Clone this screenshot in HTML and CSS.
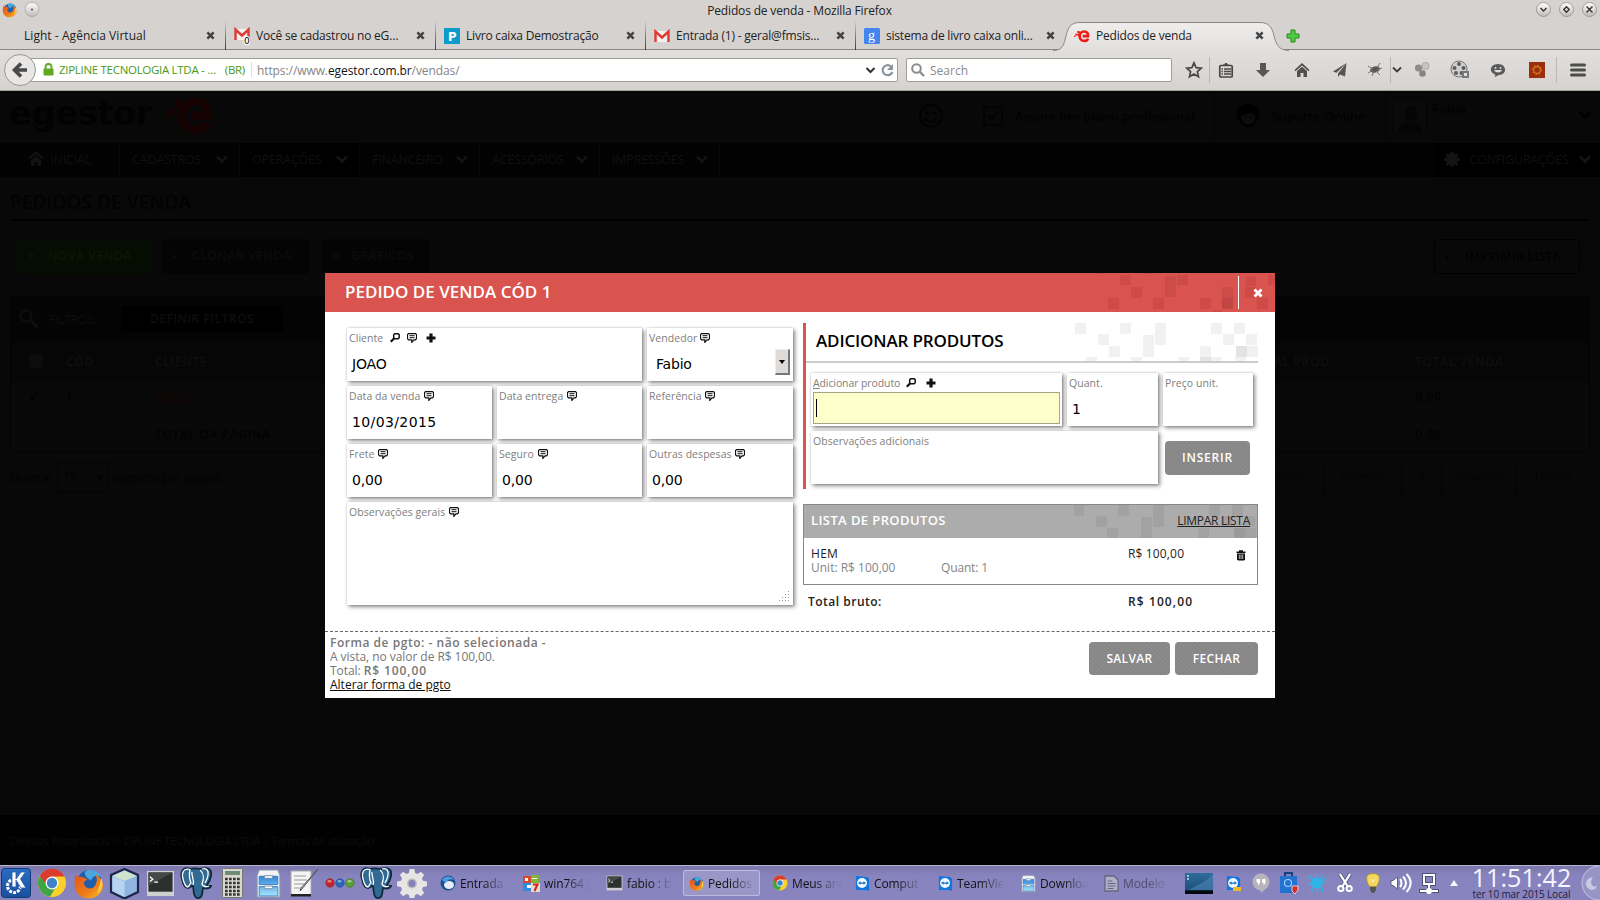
FILE: index.html
```html
<!DOCTYPE html>
<html lang="pt-BR">
<head>
<meta charset="utf-8">
<title>Pedidos de venda - Mozilla Firefox</title>
<link rel="stylesheet" href="styles.css">
</head>
<body>
<svg class="defs" width="0" height="0">
  <defs>
    <linearGradient id="gBtn" x1="0" y1="0" x2="0" y2="1"><stop offset="0" stop-color="#fff"/><stop offset="1" stop-color="#bdbbb8"/></linearGradient>
    <linearGradient id="gTab" x1="0" y1="0" x2="0" y2="1"><stop offset="0" stop-color="#efeeed"/><stop offset="1" stop-color="#e1dfdd"/></linearGradient>
    <linearGradient id="gK" x1="0" y1="0" x2="0" y2="1"><stop offset="0" stop-color="#2a6cc4"/><stop offset="1" stop-color="#1b4f9c"/></linearGradient>
    <linearGradient id="gBlue" x1="0" y1="0" x2="0" y2="1"><stop offset="0" stop-color="#2f86dd"/><stop offset="1" stop-color="#a8e2ff"/></linearGradient>
    <linearGradient id="gFox" x1="0" y1="0" x2="1" y2="1"><stop offset="0" stop-color="#e8541a"/><stop offset=".6" stop-color="#ef7d1a"/><stop offset="1" stop-color="#fbc02d"/></linearGradient>
    <linearGradient id="gPrev" x1="0" y1="0" x2="0" y2="1"><stop offset="0" stop-color="#2d6c9e"/><stop offset=".8" stop-color="#215079"/><stop offset=".85" stop-color="#05080c"/></linearGradient>
  </defs>
  <symbol id="i-close" viewBox="0 0 10 10"><path d="M1.500 1.500l7 7M8.500 1.500l-7 7" stroke="currentColor" stroke-width="2.800"/></symbol>
  <symbol id="i-chev" viewBox="0 0 14 10"><path d="M2 2.500l5 5 5-5" fill="none" stroke="currentColor" stroke-width="3"/></symbol>
  <symbol id="i-note" viewBox="0 0 10 10"><path d="M1.500 .6h7l1 1v4l-1 1.300H7L4.800 9.400V6.900H1.500l-1-1.300v-4z" fill="#fff" stroke="#111" stroke-width="1.200"/><path d="M2.500 2.700h5M2.500 4.700h5" stroke="#111" stroke-width="1"/></symbol>
  <symbol id="i-find" viewBox="0 0 10 10"><path d="M3.700 1.700L4.700 .8h3.500l1 1v3l-1 1H4.700l-1-1z" fill="#fff" stroke="#111" stroke-width="1.500"/><path d="M4.200 5.300L.8 8.800" stroke="#111" stroke-width="2.200"/></symbol>
  <symbol id="i-plus" viewBox="0 0 10 10"><path d="M5 .5v9M.5 5h9" stroke="#111" stroke-width="3.200"/></symbol>
  <symbol id="i-gmail" viewBox="0 0 16 16"><path d="M1 3h14v11H1z" fill="#f4f1ef"/><path d="M3 14V5l5 4.500L13 5v9" fill="none" stroke="#ddd"/><path d="M1.500 14V3.500L8 9.500l6.500-6V14" fill="none" stroke="#dc3b36" stroke-width="2.400"/></symbol>
  <symbol id="i-e" viewBox="0 0 48 40"><path d="M26 20.500H42C43 11 38 6.500 31 6.500C12 6.500 12 34.500 31 34.500C37 34.500 41 32 43 28.500" fill="none" stroke="currentColor" stroke-width="8"/><path d="M4 13h7v6H4zM10 5h7v7h-7zM0 19h4v4H0zM12 13h6v6h-6z" fill="currentColor"/></symbol>
  <symbol id="i-fox" viewBox="0 0 32 32"><circle cx="17" cy="15" r="13" fill="#1f5fa8"/><path d="M12 4c5-4 14-2 17 5-6-2-10 0-10 4-3-2-7-4-7-9z" fill="#4aa7dc"/><path d="M3 7c1 2 3 2 5 2 3 0 4 1 7 3-3 1-5 3-3 6 4 6 12 3 12-4 1 1 1-4-1-7 6 2 8 8 8 11 0 17-28 18-29 1-1-4 0-8 1-12z" fill="url(#gFox)"/><path d="M29 10c3 6 1 13-4 16 1-3 3-8 4-16z" fill="#fcd34a"/></symbol>
  <symbol id="i-chrome" viewBox="0 0 30 30"><circle cx="15" cy="15" r="14" fill="#fbcf2c"/><path d="M15 15L2.500 8.500A14 14 0 0 0 13 28.800l6-10z" fill="#3fa648"/><path d="M2.800 8A14 14 0 0 1 27.500 8.500H15l-5 9z" fill="#da3a2f"/><circle cx="15" cy="15" r="6.500" fill="#fff"/><circle cx="15" cy="15" r="5.200" fill="#3f82c6"/></symbol>
  <symbol id="i-term" viewBox="0 0 30 28"><path d="M1 1h28v26H1z" fill="#cfcfcf"/><path d="M2.500 2.500h25v20h-25z" fill="#2c302f"/><path d="M2.500 2.500h25L2.500 16z" fill="#454a48"/><path d="M4 7l3 2.500L4 12M8.500 12.500h4" fill="none" stroke="#fff" stroke-width="1.400"/></symbol>
  <symbol id="i-pg" viewBox="0 0 32 32"><path d="M10 2C2-1 0 6 2 12c1 5 3 9 6 9 2 0 2-2 5-2 1 5 0 11 4 12 6 1 5-6 6-10 4 1 7 0 8-2-3 0-4 0-4-1 4-5 6-14 2-16-4-2-7 0-9 0-4-1-7-1-10 0z" fill="#336a94" stroke="#0e2a3c" stroke-width="1.800"/><path d="M10 2.500C3 .5 1.500 6 3 12c1 4 3 8 5 8 2-1 1-3 3-4-2-5-2-9-1-13zM12 5c-1 4 3 8 1 13M20 3c4 3 4 9 2 14 1 3 5 3 7 2M22 2c7-2 8 5 3 14" fill="none" stroke="#fff" stroke-width="1.300"/></symbol>
  <symbol id="i-cab" viewBox="0 0 24 28"><path d="M3 1h18l2 5v21H1V6z" fill="#f3f5f7" stroke="#8a97a5"/><path d="M3 7h18v8H3zM3 17h18v9H3z" fill="url(#gBlue)" stroke="#3575b8" stroke-width=".8"/><path d="M8 6.500h8v2.500H8zM8 16.500h8V19H8z" fill="#fff" stroke="#68829c" stroke-width=".8"/></symbol>
  <symbol id="i-tv" viewBox="0 0 16 18"><path d="M1 1l12 1 2 2v13l-3-1H1z" fill="#1177dd"/><circle cx="7.500" cy="8.500" r="5.300" fill="#f4faff"/><path d="M3.200 8.500L6 6.600v1.200h3V6.600l2.800 1.900L9 10.400V9.200H6v1.200z" fill="#1473cc"/></symbol>
  <symbol id="i-gear" viewBox="0 0 32 32"><path d="M13.500 1h5l.8 4.200 2.600 1.100 3.600-2.400 3.500 3.500-2.400 3.600 1.100 2.600L32 14.500v5l-4.300.8-1.100 2.600 2.400 3.600-3.500 3.500-3.600-2.400-2.600 1.100-.8 3.300h-5l-.8-3.300-2.600-1.100L6.500 30 3 26.500l2.400-3.600-1.100-2.600L0 19.500v-5l4.300-.9L5.400 11 3 7.400l3.500-3.500 3.600 2.400 2.600-1.100z" fill="currentColor"/></symbol>
</svg>

<div class="screen">
  <header class="titlebar">
    <svg class="tb-left" width="42" height="20" viewBox="0 0 42 20"><use href="#i-fox" x="2" y="2" width="15" height="16"/><circle cx="32" cy="9.500" r="7" fill="url(#gBtn)" stroke="#a3a09c" stroke-width=".7"/><circle cx="32" cy="9.500" r=".9" fill="#333"/></svg>
    <span class="tb-title">Pedidos de venda - Mozilla Firefox</span>
    <svg class="tb-right" width="66" height="20" viewBox="0 0 66 20"><g fill="url(#gBtn)" stroke="#8f8c88" stroke-width=".8"><circle cx="9.500" cy="9.500" r="7"/><circle cx="32.500" cy="9.500" r="7"/><circle cx="55.500" cy="9.500" r="7"/></g><path d="M6.500 8l3 3 3-3M32.500 6.800l2.700 2.700-2.700 2.700-2.700-2.700zM52.500 6.500l6 6M58.500 6.500l-6 6" fill="none" stroke="#333" stroke-width="1.400"/></svg>
  </header>

  <nav class="tabs">
    <div class="tab first"><span class="tab-t">Light - Agência Virtual</span><svg class="x"><use href="#i-close"/></svg></div>
    <div class="tab"><svg class="fav" viewBox="0 0 16 18"><use href="#i-gmail" width="16" height="16" y="-1"/><text x="10" y="16.500" class="favn">0</text></svg><span class="tab-t">Você se cadastrou no eG…</span><svg class="x"><use href="#i-close"/></svg></div>
    <div class="tab"><svg class="fav" viewBox="0 0 16 18"><path d="M0 1h16v16H0z" fill="#0f9bc9"/><text x="4" y="14" class="favp">P</text></svg><span class="tab-t">Livro caixa Demostração</span><svg class="x"><use href="#i-close"/></svg></div>
    <div class="tab"><svg class="fav" viewBox="0 0 16 18"><use href="#i-gmail" width="16" height="16" y="1"/></svg><span class="tab-t">Entrada (1) - geral@fmsis…</span><svg class="x"><use href="#i-close"/></svg></div>
    <div class="tab last"><svg class="fav" viewBox="0 0 16 18"><rect y="1" width="16" height="16" rx="1.500" fill="#4484ee"/><text x="4" y="13" class="favg">g</text></svg><span class="tab-t">sistema de livro caixa onli…</span><svg class="x"><use href="#i-close"/></svg></div>
    <div class="tab active"><svg class="shape" width="236" height="30" viewBox="0 0 236 30"><path d="M0 29.500C10 29.500 11 23 13 15C15 6 18 1.500 27 1.500H206C216 1.500 219 6 221 15C223 23 226 29.500 236 29.500V31H0z" fill="url(#gTab)"/><path d="M0 29.500C10 29.500 11 23 13 15C15 6 18 1.500 27 1.500H206C216 1.500 219 6 221 15C223 23 226 29.500 236 29.500" fill="none" stroke="#8a8886"/></svg><svg class="fav red" viewBox="0 0 48 48"><use href="#i-e" width="48" height="42" y="3"/></svg><span class="tab-t">Pedidos de venda</span><svg class="x"><use href="#i-close"/></svg></div>
    <svg class="newtab" viewBox="0 0 14 14"><path d="M5 1h4v4h4v4H9v4H5V9H1V5h4z" fill="#4fce43" stroke="#23881d"/></svg>
  </nav>

  <div class="toolbar">
    <svg class="back" width="34" height="34" viewBox="0 0 34 34"><circle cx="17" cy="17" r="15.500" fill="#e9e7e5" stroke="#9a9793"/><path d="M24 17H13M18 10.500L11.500 17l6.500 6.500" fill="none" stroke="#4a4a4a" stroke-width="3.600"/></svg>
    <div class="urlbar">
      <svg class="lock" width="11" height="13" viewBox="0 0 11 13"><path d="M2.500 6V4a3 3 0 0 1 6 0v2" fill="none" stroke="#5fa81f" stroke-width="1.800"/><rect x=".5" y="5.500" width="10" height="7" rx="1" fill="#5fa81f"/></svg>
      <span class="ident">ZIPLINE TECNOLOGIA LTDA - …</span><span class="ident br">(BR)</span>
      <span class="url">https://www.<b>egestor.com.br</b>/vendas/</span>
      <svg class="urlr" width="32" height="16" viewBox="0 0 32 16"><path d="M1.500 6L5.500 10l4-4" fill="none" stroke="#333" stroke-width="2"/><path d="M26 4.500A5 5 0 1 0 27.300 10" fill="none" stroke="#8a949c" stroke-width="2.200"/><path d="M28 2v6h-6z" fill="#8a949c"/></svg>
    </div>
    <div class="search"><svg width="14" height="14" viewBox="0 0 14 14"><circle cx="5.500" cy="5.500" r="4.300" fill="none" stroke="#8c8c8c" stroke-width="2"/><path d="M8.500 8.500l4.500 4.500" stroke="#8c8c8c" stroke-width="2.400"/></svg><span>Search</span></div>
    <div class="tools">
      <span class="w30"><svg width="18" height="18" viewBox="0 0 18 18"><path d="M9 1.800l2.100 4.800 5.200.5-3.900 3.500 1.100 5.100L9 13l-4.500 2.700 1.100-5.100L1.700 7.100l5.200-.5z" fill="none" stroke="#484848" stroke-width="1.700"/></svg></span>
      <i class="sep"></i>
      <span class="w34"><svg width="16" height="16" viewBox="0 0 16 16"><rect x="1.800" y="3.500" width="12.400" height="11.500" rx="1" fill="none" stroke="#484848" stroke-width="1.700"/><path d="M6 7h7M6 9.500h7M6 12h7M3.500 7H5M3.500 9.500H5M3.500 12H5" stroke="#484848" stroke-width="1.300"/><path d="M5 4V2.500h1.500L7 1h2l.5 1.500H11V4z" fill="#484848"/></svg></span>
      <span class="w38"><svg width="16" height="16" viewBox="0 0 16 16"><path d="M5 1h6v7h4l-7 7-7-7h4z" fill="#565656"/></svg></span>
      <span class="w38"><svg width="16" height="16" viewBox="0 0 16 16"><path d="M8 1l7.500 7-1 1.200L8 3.500 1.500 9.200.5 8z" fill="#505050"/><path d="M3 9l5-4.300L13 9v6H9.500v-4h-3v4H3z" fill="#505050"/></svg></span>
      <span class="w38"><svg width="16" height="16" viewBox="0 0 16 16"><path d="M14.500 1L1 9.500l3.500 1.300zM14.500 1L6 11.500V15l2-2.500 5 2z" fill="#555"/></svg></span>
      <span class="w28"><svg width="16" height="16" viewBox="0 0 16 16"><ellipse cx="8" cy="7.500" rx="5" ry="3" fill="#555" transform="rotate(-15 8 7.500)"/><path d="M1 4l5 3M13 1l-3 5M15 6l-5 2M1 11l5-3M5 14l2-5M13 13l-4-4" stroke="#777" stroke-width="1"/></svg></span>
      <span class="w16"><svg width="10" height="8" viewBox="0 0 10 8"><path d="M1 1.500l4 4 4-4" fill="none" stroke="#3a3a3a" stroke-width="1.800"/></svg></span>
      <span class="w38"><svg width="16" height="16" viewBox="0 0 16 16"><circle cx="4.500" cy="6" r="3.600" fill="#8c8c8c"/><circle cx="11.500" cy="4" r="3.600" fill="#c5c5c5" stroke="#aaa"/><circle cx="8.500" cy="11.500" r="3.300" fill="#858585"/></svg></span>
      <span class="w38"><svg width="20" height="20" viewBox="0 0 20 20"><circle cx="9" cy="9" r="8" fill="#d0d0d0" stroke="#777"/><g fill="#5d5d5d"><circle cx="9" cy="4" r="2"/><circle cx="4.500" cy="8" r="2"/><circle cx="13.500" cy="8" r="2"/><circle cx="6" cy="13" r="2"/><circle cx="11.500" cy="13" r="2"/></g><path d="M12 11h7v7h-7z" fill="#777"/><path d="M14 13h3v3h-3z" fill="#ddd"/></svg></span>
      <span class="w38"><svg width="16" height="16" viewBox="0 0 16 16"><path d="M8 2c9 0 9.500 11 1 11-1 0-2 1.500-4.500 2 .8-1 1-2 .5-2.500C-2 10 .5 2 8 2z" fill="#595959"/><circle cx="5.500" cy="6" r="1" fill="#ddd"/><circle cx="10.500" cy="6" r="1" fill="#ddd"/><path d="M4 8h8c-1 3.200-7 3.200-8 0z" fill="#ddd"/></svg></span>
      <span class="w38"><svg width="16" height="16" viewBox="0 0 16 16"><path d="M0 0h16v16H0z" fill="#9a2f0c"/><circle cx="8" cy="8" r="3.400" fill="none" stroke="#e07a1a" stroke-width="1.100"/><circle cx="8" cy="8" r="4.600" fill="none" stroke="#d9962a" stroke-width="1" stroke-dasharray="1.300 2.300"/></svg></span>
      <i class="sep"></i>
      <span class="w42"><svg width="16" height="14" viewBox="0 0 16 14"><path d="M1.500 2h13M1.500 7h13M1.500 12h13" stroke="#4c4c4c" stroke-width="3" stroke-linecap="round"/></svg></span>
    </div>
  </div>

  <main class="page">
    <div class="p-head">
      <span class="logo">egestor</span><svg class="logo-e" width="48" height="40"><use href="#i-e"/></svg>
      <div class="p-right">
        <svg class="smile" width="26" height="26" viewBox="0 0 26 26"><circle cx="13" cy="13" r="11" fill="none" stroke="#020202" stroke-width="2"/><circle cx="9" cy="10" r="1.500"/><circle cx="17" cy="10" r="1.500"/><path d="M7 15c2 5 10 5 12 0" fill="none" stroke="#020202" stroke-width="2"/></svg>
        <svg class="chk" width="22" height="22" viewBox="0 0 22 22"><path d="M2 2h18v18H2zM6 10l4 4 6-8" fill="none" stroke="#020202" stroke-width="2"/></svg>
        <span class="p-plan">Assine um plano profissional</span>
        <span class="p-sup"><svg width="24" height="26" viewBox="0 0 24 26"><path d="M12 1c12 0 11 9 11 16h-3c-3 10-13 10-16 0H1C1 10 0 1 12 1z"/><path d="M5 12c5 0 8-1 9-3 1 2 3 3 5 3 1 13-14 13-14 0z" fill="#0c0c0c"/><circle cx="9" cy="14" r="1"/><circle cx="15" cy="14" r="1"/></svg><span>Suporte Online</span></span>
        <span class="p-user"><svg width="34" height="34" viewBox="0 0 34 34"><path d="M.5.5h33v33H.5z" fill="#0a0a0a" stroke="#050505"/><ellipse cx="18" cy="14" rx="6" ry="8" fill="#050505"/><path d="M5 33c0-14 24-14 24 0z" fill="#050505"/></svg><span>Fabio</span><svg class="cv" width="16" height="12"><use href="#i-chev"/></svg></span>
      </div>
    </div>
    <div class="p-nav">
      <span class="ni home"><svg width="16" height="16" viewBox="0 0 16 16"><path d="M8 0l8 7-1.500 1.500L8 3 1.500 8.500 0 7zM3 9l5-4.500L13 9v6H9.500v-4h-3v4H3z" fill="#121212"/></svg>INICIAL</span>
      <span class="ni">CADASTROS<svg class="cv"><use href="#i-chev"/></svg></span>
      <span class="ni on">OPERAÇÕES<svg class="cv"><use href="#i-chev"/></svg></span>
      <span class="ni">FINANCEIRO<svg class="cv"><use href="#i-chev"/></svg></span>
      <span class="ni">ACESSÓRIOS<svg class="cv"><use href="#i-chev"/></svg></span>
      <span class="ni">IMPRESSÕES<svg class="cv"><use href="#i-chev"/></svg></span>
      <span class="ni conf"><svg width="16" height="16" class="cg"><use href="#i-gear"/></svg>CONFIGURAÇÕES<svg class="cv"><use href="#i-chev"/></svg></span>
    </div>
    <h1 class="p-title">PEDIDOS DE VENDA</h1>
    <div class="p-btns"><span class="pb green"><i>+</i>NOVA VENDA</span><span class="pb c"><i>▪</i>CLONAR VENDA</span><span class="pb g"><i>✦</i>GRÁFICOS</span><span class="pb print"><i>▪</i>IMPRIMIR LISTA</span></div>
    <div class="p-box">
      <div class="p-filter"><svg width="20" height="20" viewBox="0 0 20 20"><circle cx="7" cy="7" r="5.500" fill="none" stroke="#0f0f0f" stroke-width="2"/><path d="M11 11l7 7" stroke="#0f0f0f" stroke-width="3"/></svg><span class="f1">FILTROS:</span><span class="f2">DEFINIR FILTROS</span></div>
      <div class="p-row th"><span class="box"></span><span>CÓD</span><span>CLIENTE</span><span>TOTAL PROD.</span><span>TOTAL VENDA</span></div>
      <div class="p-row tr"><span>✔</span><span>1</span><span class="lnk">JOAO</span><span></span><span>0,00</span></div>
      <div class="p-row tot"><span></span><span></span><span>TOTAL DA PÁGINA</span><span></span><span>0,00</span></div>
    </div>
    <div class="p-pager"><span>Mostrar</span><span class="sel">15 <i>▾</i></span><span>registros por página</span><div class="pages"><b>Primeiro</b><b class="w1">Anterior</b><b class="w2">1</b><b class="w3">Próximo</b><b class="w3">Último</b></div></div>
    <footer class="p-foot">Direitos Reservados © ZIPLINE TECNOLOGIA LTDA | Termos de utilização</footer>
  </main>

  <footer class="taskbar">
    <div class="launch">
      <span class="k"><svg width="30" height="30" viewBox="0 0 30 30"><rect x=".5" y=".5" width="29" height="29" rx="3" fill="url(#gK)" stroke="#123a78"/><circle cx="13" cy="18" r="6.500" fill="none" stroke="#fff" stroke-width="3" stroke-dasharray="2.800 1.200"/><path d="M11 4h4v7l5-7h4.500l-5 7 5.500 9h-5l-5-8v7h-4z" fill="#fff" stroke="#1f5aae" stroke-width=".8"/></svg></span>
      <span><svg width="30" height="30"><use href="#i-chrome"/></svg></span>
      <span><svg width="31" height="31"><use href="#i-fox"/></svg></span>
      <span><svg width="31" height="31" viewBox="0 0 31 31"><path d="M15.500 1L29 7v17l-13.500 6.500L2 24V7z" fill="#8fb4e0" stroke="#1c2748" stroke-width="2.200"/><path d="M15.500 2.500L27.500 8l-12 5L3.500 8z" fill="#cfe3cf"/><path d="M3.500 8.500l12 5v15.500l-12-6z" fill="#b7d3ef"/></svg></span>
      <span><svg width="29" height="27"><use href="#i-term"/></svg></span>
      <span><svg width="32" height="32"><use href="#i-pg"/></svg></span>
      <span><svg width="21" height="30" viewBox="0 0 21 30"><rect x=".5" y=".5" width="20" height="29" rx="1" fill="#d9d8d0" stroke="#77756c"/><path d="M3 3h15v4H3z" fill="#6f8b76"/><path d="M3 11h15M3 15h15M3 19h15M3 23h15M3 26.500h15" stroke="#333" stroke-width="2.400" stroke-dasharray="2.700 1.300"/></svg></span>
      <span><svg width="25" height="29"><use href="#i-cab"/></svg></span>
      <span><svg width="32" height="30" viewBox="0 0 32 30"><path d="M3 3h20v24H3z" fill="#f5f5f5" stroke="#aaa"/><path d="M3 26h20v2.500H3z" fill="#222"/><path d="M6 8h12M6 12h13M6 16h11M6 20h7" stroke="#999"/><path d="M30 1L14 21l-2 2 1-3z" fill="#ddd" stroke="#555"/></svg></span>
      <span><svg width="30" height="10" viewBox="0 0 30 10"><circle cx="5" cy="5" r="4.200" fill="#c8222a" stroke="#8d2025" stroke-width=".6"/><circle cx="15" cy="5" r="4.200" fill="#2766b8" stroke="#1c4a8a" stroke-width=".6"/><circle cx="25" cy="5" r="4.200" fill="#57a032" stroke="#3c741d" stroke-width=".6"/><g fill="#fff" opacity=".45"><ellipse cx="4.500" cy="3.200" rx="2.200" ry="1.300"/><ellipse cx="14.500" cy="3.200" rx="2.200" ry="1.300"/><ellipse cx="24.500" cy="3.200" rx="2.200" ry="1.300"/></g></svg></span>
      <span><svg width="32" height="32"><use href="#i-pg"/></svg></span>
      <span><svg width="30" height="30" viewBox="0 0 32 32" class="bg"><use href="#i-gear"/><circle cx="16" cy="16.500" r="4.500" fill="#8680b8" stroke="#bbb" stroke-width="1.500"/></svg></span>
    </div>
    <div class="tasks">
      <span class="task"><svg width="16" height="16" viewBox="0 0 16 16"><circle cx="8" cy="8" r="7.500" fill="#1d4f93"/><ellipse cx="9" cy="10" rx="5" ry="4" fill="#e8eef5"/><path d="M2 5c3-5 10-4 12 0-4-2-7 0-8 3z" fill="#4d9bde"/></svg><em>Entrada</em></span>
      <span class="task"><svg width="17" height="17" viewBox="0 0 17 17"><path d="M0 1h8v7H0z" fill="#d64b2c"/><path d="M8 0h8v8H8z" fill="#7fb53b"/><path d="M0 8h8v8H0z" fill="#2e8be0"/><path d="M8 8h9v9H8z" fill="#e8d9c8"/><path d="M2 3h3v3H2zM4 10h4v3H4zM9 3h5v1H9z" fill="#fff"/><path d="M10 9.500h4.500l-3 6.500" fill="none" stroke="#c22" stroke-width="2"/></svg><em>win764 [</em></span>
      <span class="task"><svg width="17" height="16"><use href="#i-term"/></svg><em>fabio : b</em></span>
      <span class="task cur"><svg width="15" height="15"><use href="#i-fox"/></svg><em>Pedidos</em></span>
      <span class="task"><svg width="16" height="16"><use href="#i-chrome"/></svg><em>Meus are</em></span>
      <span class="task"><svg width="15" height="17"><use href="#i-tv"/></svg><em>Comput</em></span>
      <span class="task"><svg width="15" height="17"><use href="#i-tv"/></svg><em>TeamVie</em></span>
      <span class="task"><svg width="15" height="17"><use href="#i-cab"/></svg><em>Downloa</em></span>
      <span class="task dim"><svg width="15" height="17" viewBox="0 0 15 17"><path d="M1 1h9l4 4v11H1z" fill="#b3b0cc" stroke="#66647c" stroke-width="1.300"/><path d="M3.500 6h5M3.500 8.500h8M3.500 11h8M3.500 13.500h6" stroke="#66647c"/></svg><em>Modelo</em></span>
    </div>
    <div class="tray">
      <svg class="prev" width="28" height="21" viewBox="0 0 28 21"><path d="M0 0h28v21H0z" fill="url(#gPrev)"/><path d="M4 17C12 12 20 10 28 1v16z" fill="#4d87b5" opacity=".6"/><path d="M2 3h2M2 6h2" stroke="#cde" stroke-width="1.400"/></svg>
      <span><svg width="15" height="17"><use href="#i-tv"/><path d="M7 12h8v4H7z" fill="#f3b52d"/></svg></span>
      <span><svg width="18" height="20" viewBox="0 0 18 20"><circle cx="9" cy="9" r="8.500" fill="#b7b5bb"/><path d="M8 16l5 0-4 4z" fill="#b7b5bb"/><path d="M4.500 6H8v4L6 12.500V9.500H4.500zM10 6h3.500v4l-2 2.500V9.500H10z" fill="#fff"/></svg></span>
      <span><svg width="20" height="22" viewBox="0 0 20 22"><path d="M6 4V1h7v3" fill="none" stroke="#16407d" stroke-width="2"/><path d="M1 4h17v17H1z" fill="#2273cf"/><circle cx="9" cy="11" r="3.500" fill="none" stroke="#9ad0ff" stroke-width="1.200"/><path d="M13 14h6v4l-3 4-3-3z" fill="#d92c2c" stroke="#fff" stroke-width=".7"/></svg></span>
      <span><svg width="20" height="20" viewBox="0 0 20 20"><circle cx="10" cy="10" r="5.500" fill="#2fb4e6"/><path d="M10 1l1 18M1 11l18-2M3 3l13 14M17 2L4 17" stroke="#2fb4e6" stroke-width="1.300"/><path d="M1 5h2M17 6h2M4 18h2M15 18h2" stroke="#2fb4e6" stroke-width="2"/></svg></span>
      <span><svg width="16" height="20" viewBox="0 0 16 20"><path d="M3 1l8 13M13 1L5 14" stroke="#555a80" stroke-width="4"/><path d="M3 1l8 13M13 1L5 14" stroke="#fff" stroke-width="2.300"/><circle cx="3.800" cy="15.500" r="2.600" fill="none" stroke="#fff" stroke-width="2"/><circle cx="12.200" cy="15.500" r="2.600" fill="none" stroke="#fff" stroke-width="2"/></svg></span>
      <span><svg width="14" height="21" viewBox="0 0 14 21"><path d="M7 .5c9 0 7 8 3.500 13h-7C0 8.500-2 .5 7 .5z" fill="#f2d660" stroke="#a58a2c" stroke-width=".8"/><path d="M5 6l2 3 2-3" fill="none" stroke="#fff6c0"/><path d="M4 14h6v3l-2 3H6l-2-3z" fill="#555"/></svg></span>
      <span><svg width="22" height="22" viewBox="0 0 22 22"><path d="M1 8.500h2L7.500 5v12L3 13.500H1z" fill="#fff" stroke="#5c5f88"/><path d="M10 7c2 2 2 6 0 8M13 4.500c4 4 4 9 0 13M16.500 2c5.500 6 5.500 12 0 18" fill="none" stroke="#fff" stroke-width="2"/></svg></span>
      <span><svg width="20" height="21" viewBox="0 0 20 21"><path d="M5 2h10v9H5zM10 11v5M0 18h20" fill="none" stroke="#4f5278" stroke-width="4"/><path d="M5 2h10v9H5zM10 11v5M1 18h18" fill="none" stroke="#fff" stroke-width="2"/><path d="M7 18a3 3 0 0 1 6 0 3 3 0 0 1-6 0" fill="#fff"/></svg></span>
      <span class="up"><svg width="8" height="6" viewBox="0 0 8 6"><path d="M4 0l4 6H0z" fill="#f4f4fa"/></svg></span>
      <div class="clock"><strong>11:51:42</strong><small>ter 10 mar 2015 Local</small></div>
      <svg class="moon" width="19" height="34" viewBox="0 0 19 34"><circle cx="18" cy="17" r="17" fill="#9794c6" stroke="#c5c4e0"/><path d="M12 11c-8 1-10 10-2 13 3 0 5-1 6-4-5 2-8-3-4-9z" fill="#c9c8e4"/></svg>
    </div>
  </footer>

  <section class="dialog">
    <div class="d-head">
      <h2>PEDIDO DE VENDA CÓD 1</h2>
      <svg class="px" width="180" height="39" viewBox="0 0 180 39" fill="#7a2020"><path d="M13 25h11v11H13zM25 2h11v10H25zM36 14h11v11H36zM58 25h11v11H58zM70 3h11v21H70zM82 2h11v10H82zM105 25h11v11h-11zM127 14h11v11h-11zM151 3h10v10h-10zM173 2h7v10h-7zM162 25h11v11h-11zM2 0h9v1H2zM47 0h10v1H47zM117 37h10v2h-10zM150 14h11v11h-11z" opacity=".13"/><path d="M127 25h11v11h-11z" opacity=".26"/></svg>
      <span class="d-x"><svg width="10" height="10"><use href="#i-close"/></svg></span>
    </div>
    <div class="d-body">
      <div class="left">
        <div class="fld s2"><label>Cliente <svg class="ic"><use href="#i-find"/></svg><svg class="ic n2"><use href="#i-note"/></svg><svg class="ic n3"><use href="#i-plus"/></svg></label><p>JOAO</p></div>
        <div class="fld vend"><label>Vendedor <svg class="ic"><use href="#i-note"/></svg></label><p>Fabio</p><span class="drop"><svg width="6" height="4" viewBox="0 0 6 4"><path d="M0 0h6L3 4z"/></svg></span></div>
        <div class="fld"><label>Data da venda <svg class="ic"><use href="#i-note"/></svg></label><p class="date">10/03/2015</p></div>
        <div class="fld"><label>Data entrega <svg class="ic"><use href="#i-note"/></svg></label></div>
        <div class="fld"><label>Referência <svg class="ic"><use href="#i-note"/></svg></label></div>
        <div class="fld"><label>Frete <svg class="ic"><use href="#i-note"/></svg></label><p>0,00</p></div>
        <div class="fld"><label>Seguro <svg class="ic"><use href="#i-note"/></svg></label><p>0,00</p></div>
        <div class="fld"><label>Outras despesas <svg class="ic"><use href="#i-note"/></svg></label><p>0,00</p></div>
        <div class="fld s3"><label>Observações gerais <svg class="ic"><use href="#i-note"/></svg></label><svg class="grip" width="12" height="12" viewBox="0 0 12 12"><path d="M10.500 1v10M7.500 4v7M4.500 7v4M1.500 10v1" stroke="#999" stroke-dasharray="1 2"/></svg></div>
      </div>
      <div class="right">
        <div class="add">
          <div class="a-head"><h3>ADICIONAR PRODUTOS</h3>
            <svg width="183" height="38" viewBox="0 0 183 38"><path id="pat" opacity=".055" d="M0 0h11v11H0zM23 11h11v11H23zM34 23h11v11H34zM11 34h11v4H11zM45 0h11v11H45zM80 0h11v22H80zM68 12h11v22H68zM56 34h11v4H56zM103 34h11v4h-11zM125 23h11v11h-11zM136 0h11v11h-11zM148 11h11v11h-11zM159 0h11v11h-11zM171 11h11v11h-11zM172 23h11v11h-11zM136 34h11v4h-11zM160 34h11v4h-11z"/><path d="M161 23h11v11h-11zM125 34h11v4h-11z" opacity=".11"/></svg></div>
          <div class="a-grid">
            <div class="fld"><label class="ap"><u>A</u>dicionar produto <svg class="ic"><use href="#i-find"/></svg><svg class="ic n4"><use href="#i-plus"/></svg></label><div class="focus"><i></i></div></div>
            <div class="fld"><label>Quant.</label><p>1</p></div>
            <div class="fld"><label>Preço unit.</label></div>
            <div class="fld s2"><label>Observações adicionais</label></div>
            <button class="btn ins">INSERIR</button>
          </div>
        </div>
        <div class="list">
          <div class="l-head"><svg width="183" height="33" viewBox="1 0 183 33"><use href="#pat"/><path d="M161 23h11v11h-11z" opacity=".1"/></svg><h4>LISTA DE PRODUTOS</h4><a>LIMPAR LISTA</a></div>
          <div class="l-row"><div class="c1"><span>HEM</span><small>Unit: R$ 100,00</small></div><small class="c2">Quant: 1</small><span class="c3">R$ 100,00</span><svg class="trash" width="10" height="11" viewBox="0 0 10 11"><path d="M3 1h4M.5 2.200h9" stroke="#111" stroke-width="1.400"/><path d="M1 3.500h8V9.500l-1 1H2l-1-1z" fill="#111"/><path d="M3.300 4.500V9M5 4.500V9M6.700 4.500V9" stroke="#fff" stroke-width=".7"/></svg></div>
        </div>
        <div class="total"><b>Total bruto:</b><b>R$ 100,00</b></div>
      </div>
    </div>
    <div class="d-foot">
      <div class="pay"><b class="fp">Forma de pgto: - não selecionada -</b><span>A vista, no valor de R$ 100,00.</span><span>Total: <b class="tv">R$ 100,00</b></span><a>Alterar forma de pgto</a></div>
      <button class="btn">SALVAR</button><button class="btn fe">FECHAR</button>
    </div>
  </section>
</div>
</body>
</html>
```

FILE: styles.css
```css
* { box-sizing: border-box; margin: 0; }
body { width: 1600px; height: 900px; overflow: hidden; font: 12px "Open Sans", "Noto Sans", sans-serif; letter-spacing: -.2px; color: #222; }
.defs { position: absolute; }
svg { display: block; flex: none; }
.screen { position: relative; width: 1600px; height: 900px; display: flex; flex-direction: column; background: #d6d2cf; }

/* window frame */
.titlebar { height: 20px; display: flex; justify-content: space-between; align-items: center; white-space: nowrap; }
.tb-left { margin-right: 23px; }
.tb-title { line-height: 20px; padding-top: 1px; letter-spacing: -.16px; }
.tabs { height: 30px; display: flex; padding-top: 1px; border-bottom: 1px solid #8a8886; }
.tab { position: relative; width: 210px; height: 29px; display: flex; align-items: center; padding-left: 8px; border-right: 1px solid; border-image: linear-gradient(#d6d2cf, #333) 1; }
.tab.first { width: 226px; padding-left: 24px; letter-spacing: .05px; }
.tab.last, .tab.active { border: 0; }
.tab.active { width: 220px; padding-left: 8px; }
.tab-t { flex: 1; white-space: nowrap; line-height: 28px; position: relative; }
.fav { width: 16px; height: 18px; margin-right: 6px; position: relative; }
.red { color: #ee1c16; }
.favn { font: 9px "DejaVu Sans", sans-serif; fill: #000; stroke: #fff; stroke-width: 2px; paint-order: stroke; }
.favp { font: bold 13px "DejaVu Sans Condensed", sans-serif; fill: #fff; }
.favg { font: 14px "Liberation Serif", serif; fill: #fff; }
.x { width: 9px; height: 9px; color: #444; margin-right: 10px; position: relative; }
.tab.last .x { margin-right: 11px; }
.tab.active .x { margin-right: 22px; }
.shape { position: absolute; left: -13px; top: 0; }
.newtab { width: 14px; height: 14px; margin: 8px 0 0 0; }
.toolbar { height: 41px; display: flex; align-items: center; padding: 0 0 1px 3px; background: linear-gradient(#e1dfdd, #d6d2cf); border-bottom: 1px solid #a4a19d; }
.back { position: relative; margin-right: -10px; }
.urlbar { width: 871px; height: 24px; background: #fff; border: 1px solid #a09d99; border-radius: 2px; display: flex; align-items: center; padding-left: 15px; white-space: nowrap; }
.lock { margin-right: 5px; }
.ident { color: #4b9a14; font-size: 11.500px; letter-spacing: -.3px; }
.br { margin-left: 9px; padding-right: 6px; border-right: 1px solid #ddd; }
.url { margin-left: 5px; flex: 1; color: #858585; letter-spacing: -.08px; padding-top: 1px; }
.url b { font-weight: 400; color: #111; }
.search { width: 266px; height: 24px; margin-left: 8px; background: #fff; border: 1px solid #a09d99; border-radius: 2px; display: flex; align-items: center; gap: 5px; padding: 1px 0 0 4px; color: #8a8a8a; letter-spacing: 0; }
.tools { display: flex; align-items: center; height: 40px; margin-left: 7px; }
.tools span { display: flex; justify-content: center; align-items: center; padding-top: 1px; }
.sep { width: 1px; height: 26px; background: #bab7b4; }
.w30 { width: 30px; } .w34 { width: 32px; } .w38 { width: 38.300px; } .w28 { width: 30px; } .w42 { width: 43px; }
.tools .w34 + .w38 { width: 41px; }
.w16 { width: 13px; height: 26px; border-left: 1px solid #bab7b4; }

/* dimmed page behind the dialog */
.page { flex: 1; background: #080808; color: #020202; display: flex; flex-direction: column; }
.p-head { height: 52px; display: flex; padding-left: 9px; }
.logo { font: bold 34px/44px "DejaVu Sans", sans-serif; letter-spacing: -.6px; width: 156px; }
.logo-e { color: #170202; margin-top: 4px; }
.p-right { margin-left: auto; display: flex; align-items: center; height: 50px; font-size: 13px; font-weight: 600; letter-spacing: 0; white-space: nowrap; }
.smile { margin-right: 38px; } .chk { margin-right: 11px; }
.p-plan { width: 199px; }
.p-sup { width: 171px; height: 50px; border-left: 1px solid #030303; display: flex; align-items: center; padding-left: 21px; gap: 11px; }
.p-user { width: 215px; height: 50px; border-left: 1px solid #030303; display: flex; padding: 8px 8px 0 7px; gap: 5px; }
.p-user .cv { margin: 11px 0 0 auto; color: #000; }
.p-nav { height: 36px; background: #020202; border-bottom: 2px solid #0d0606; display: flex; color: #101010; }
.ni { width: 120px; display: flex; align-items: center; justify-content: space-between; padding: 0 10px 2px 12px; border-right: 1px solid #080808; font-size: 12.500px; white-space: nowrap; }
.ni.on { background: #000; } .ni.home { width: 120px; padding: 0 28px 2px 28px; }
.cv { width: 14px; height: 10px; color: #131313; }
.conf { margin-left: auto; width: 166px; padding: 0 8px 2px 10px; background: #000; border: 0; }
.cg { color: #131313; }
.p-title { height: 42px; margin: 0 10px; font-size: 19px; line-height: 46px; font-weight: 600; letter-spacing: .1px; border-bottom: 2px solid #010101; }
.p-btns { display: flex; height: 35px; margin: 18px 20px 0 18px; gap: 12px; }
.pb { border-radius: 4px; line-height: 34px; font-size: 12px; font-weight: 600; letter-spacing: .6px; background: #040404; color: #0c0c0c; white-space: nowrap; }
.pb i { display: inline-block; width: 30px; padding-left: 10px; font-style: normal; }
.pb.green { width: 132px; background: #050d02; color: #0c1609; } .c { width: 147px; } .g { width: 108px; }
.print { margin-left: auto; width: 146px; background: none; border: 1px solid #010101; color: #010101; letter-spacing: .4px; }
.p-box { margin: 22px 10px 0; height: 156px; border: 1px solid #030303; }
.p-filter { height: 44px; background: #040404; display: flex; align-items: center; padding-left: 8px; color: #0e0e0e; }
.f1 { margin-left: 10px; width: 72px; } .f2 { width: 162px; text-align: center; background: #000; line-height: 26px; font-weight: 600; letter-spacing: .5px; }
.p-row { height: 38px; display: grid; grid-template-columns: 55px 89px 1094px 166px 1fr; align-items: center; font-weight: 600; letter-spacing: .7px; }
.p-row > :first-child { margin-left: 18px; }
.th { background: #060606; color: #0f0f0f; height: 40px; } .tr { height: 34px; padding-bottom: 4px; }
.box { width: 14px; height: 14px; background: #0c0c0c; border-radius: 3px; }
.lnk { color: #160404; text-decoration: underline; }
.p-pager { display: flex; align-items: center; margin: 10px 10px 0; height: 30px; gap: 4px; font-size: 12px; }
.sel { width: 51px; border: 1px solid #020202; line-height: 28px; padding: 0 5px; display: flex; justify-content: space-between; }
.pages { margin-left: auto; display: flex; }
.pages b { width: 86px; text-align: center; line-height: 34px; border: 1px solid #050505; font-weight: 400; color: #040404; }
.pages .w1 { width: 78px; } .pages .w2 { width: 40px; } .pages .w3 { width: 74px; }
.p-foot { margin-top: auto; height: 50px; background: #010101; color: #0d0d0d; font-size: 11px; letter-spacing: -.15px; line-height: 52px; padding-left: 10px; }

/* desktop panel */
.taskbar { height: 35px; border-top: 1px solid #b7b5d4; background: linear-gradient(#7c78ac, #8783be 30%, #8884be); display: flex; }
.launch { display: flex; width: 434px; height: 34px; }
.launch span { width: 36px; display: flex; align-items: center; justify-content: center; flex: none; overflow: hidden; }
.launch .k { width: 33px; padding-right: 1px; }
.launch .k + span { margin-left: 1px; }
.bg { color: #e6e5e3; }
.tasks { display: flex; width: 751px; }
.task { width: 77px; height: 26px; margin: 4px 6px 0 0; padding-left: 5px; display: flex; align-items: center; gap: 4px; flex: none; border: 1px solid transparent; border-radius: 2px; }
.task em { font-style: normal; white-space: nowrap; letter-spacing: -.1px; width: 54px; color: transparent; background: linear-gradient(90deg, #111 45%, rgba(17,17,17,.05) 90%); -webkit-background-clip: text; background-clip: text; }
.cur { background: #9a97c8; border-color: #bcbade; }
.dim em { opacity: .5; }
.tray { display: flex; align-items: center; flex: 1; }
.tray > span { width: 28px; display: flex; justify-content: center; }
.tray .prev { margin-right: 6px; }
.tray .up { width: 22px; }
.clock { width: 107px; margin-left: 3px; text-align: center; height: 34px; }
.clock strong { display: block; font: 25px/23px "Open Sans", sans-serif; color: #f5f5ff; letter-spacing: .1px; white-space: nowrap; }
.clock small { display: block; font-size: 10px; line-height: 10px; letter-spacing: -.15px; color: #222040; white-space: nowrap; }
.moon { margin-left: auto; }

/* order dialog, floats over the page */
.dialog { position: absolute; left: 325px; top: 273px; width: 950px; height: 425px; background: #fff; display: flex; flex-direction: column; }
.d-head { height: 39px; background: #d9534f; display: flex; align-items: center; padding-left: 20px; position: relative; }
.d-head h2 { flex: 1; font-size: 17px; font-weight: 600; color: #fff; line-height: 37px; letter-spacing: 0; padding-bottom: 2px; }
.px { position: absolute; right: 0; top: 0; }
.d-x { position: relative; width: 37px; height: 33px; border-left: 1px solid #fff; display: flex; align-items: center; justify-content: center; color: #fff; padding-left: 1px; }
.d-body { height: 320px; display: flex; padding: 11px 17px 0 22px; gap: 10px; border-bottom: 1px dashed #666; }
.left { display: grid; width: 446px; grid-template-columns: 145px 145px 146px; grid-template-rows: 53px 53px 53px 103px; gap: 5px; margin-top: 5px; }
.fld { background: #fff; box-shadow: 2px 2px 4px rgba(0,0,0,.45), 0 0 2px rgba(0,0,0,.2); padding-left: 2px; position: relative; }
.s2 { grid-column: span 2; } .s3 { grid-column: span 3; }
.fld label { display: flex; height: 20px; align-items: center; font-size: 10.500px; color: #7e7e7e; letter-spacing: .06px; white-space: pre; }
.fld label.ap { letter-spacing: -.1px; }
.fld p { font: 14px/17px "DejaVu Sans", sans-serif; letter-spacing: -.2px; color: #000; margin: 8px 0 0 3px; }
.fld .date { letter-spacing: .38px; }
.ic { width: 10px; height: 10px; margin-left: 1px; }
.ic.n2 { margin-left: 7px; } .ic.n3 { margin-left: 9px; } .ic.n4 { margin-left: 10px; }
.fld label .ic:nth-of-type(1) { margin-left: 1px; }
.vend label .ic:nth-of-type(1) { margin-left: 0; }
.s2 label .ic:nth-of-type(1) { margin-left: 4px; }
.fld .ap .ic:nth-of-type(1) { margin-left: 3px; }
.vend p { margin-left: 7px; }
.drop { position: absolute; right: 3px; top: 21px; width: 15px; height: 26px; background: #dddad7; border: 1px solid #eee; border-right: 2px solid #777; border-bottom: 2px solid #777; display: flex; align-items: center; justify-content: center; }
.grip { position: absolute; right: 3px; bottom: 3px; }
.right { width: 455px; }
.add { height: 166px; border-left: 3px solid #d9534f; }
.a-head { height: 40px; border-bottom: 2px solid #ccc; display: flex; justify-content: space-between; }
.a-head h3 { font-size: 17px; font-weight: 600; color: #000; line-height: 36px; margin-left: 10px; letter-spacing: -.15px; white-space: nowrap; }
.a-grid { display: grid; grid-template-columns: 251px 91px 90px; grid-template-rows: 53px 53px; gap: 5px; margin: 10px 0 0 5px; }
.focus { width: 247px; height: 32px; margin-top: -1px; background: #ffffcb; border: 1px solid #a5a489; padding: 6px 2px; }
.focus i { display: block; width: 1px; height: 18px; background: #000; }
.btn { width: 81px; height: 33px; border: 0; border-radius: 4px; padding: 0 0 1px; font: 600 12px "Open Sans", sans-serif; letter-spacing: .35px; color: #fff; background: repeating-linear-gradient(45deg, #868686 0 1.500px, #8c8c8c 1.500px 3px); }
.ins { width: 85px; height: 34px; margin: 10px 0 0 2px; padding-bottom: 2px; letter-spacing: .8px; }
.list { height: 81px; margin-top: 15px; border: 1px solid #888; }
.l-head { height: 33px; background: #acacac; position: relative; display: flex; align-items: center; justify-content: space-between; padding: 0 7px 2px; }
.l-head svg { position: absolute; right: 0; top: 0; }
.l-head h4 { position: relative; font-size: 13px; font-weight: 600; color: #fff; letter-spacing: .4px; padding-bottom: 2px; }
.l-head a { position: relative; font-size: 12px; text-decoration: underline; letter-spacing: -.28px; }
.l-row { display: flex; padding: 9px 0 0 7px; line-height: 14px; font-size: 12px; }
.l-row small { font-size: 12px; color: #858585; letter-spacing: 0; }
.c1 { width: 130px; display: flex; flex-direction: column; letter-spacing: .3px; } .c2 { width: 187px; padding-top: 14px; } .l-row .c2 { letter-spacing: -.15px; } .c3 { width: 108px; letter-spacing: .15px; }
.trash { margin-top: 3px; }
.total { display: flex; line-height: 16px; padding: 9px 0 0 5px; }
.total b { font-weight: 600; width: 320px; letter-spacing: .5px; white-space: nowrap; }
.total b + b { width: 80px; letter-spacing: 1.100px; }
.d-foot { flex: 1; display: flex; padding: 3px 17px 0 5px; gap: 5px; }
.pay { flex: 1; display: flex; flex-direction: column; align-items: flex-start; font-size: 12px; line-height: 14px; letter-spacing: -.05px; color: #777; padding-top: 1px; }
.pay b { font-weight: 600; }
.pay a { color: #111; text-decoration: underline; letter-spacing: 0; }
.pay .fp { letter-spacing: .53px; }
.pay .tv { letter-spacing: .9px; }
.d-foot .btn { margin-top: 7px; }
.fe { width: 83px; }
```
